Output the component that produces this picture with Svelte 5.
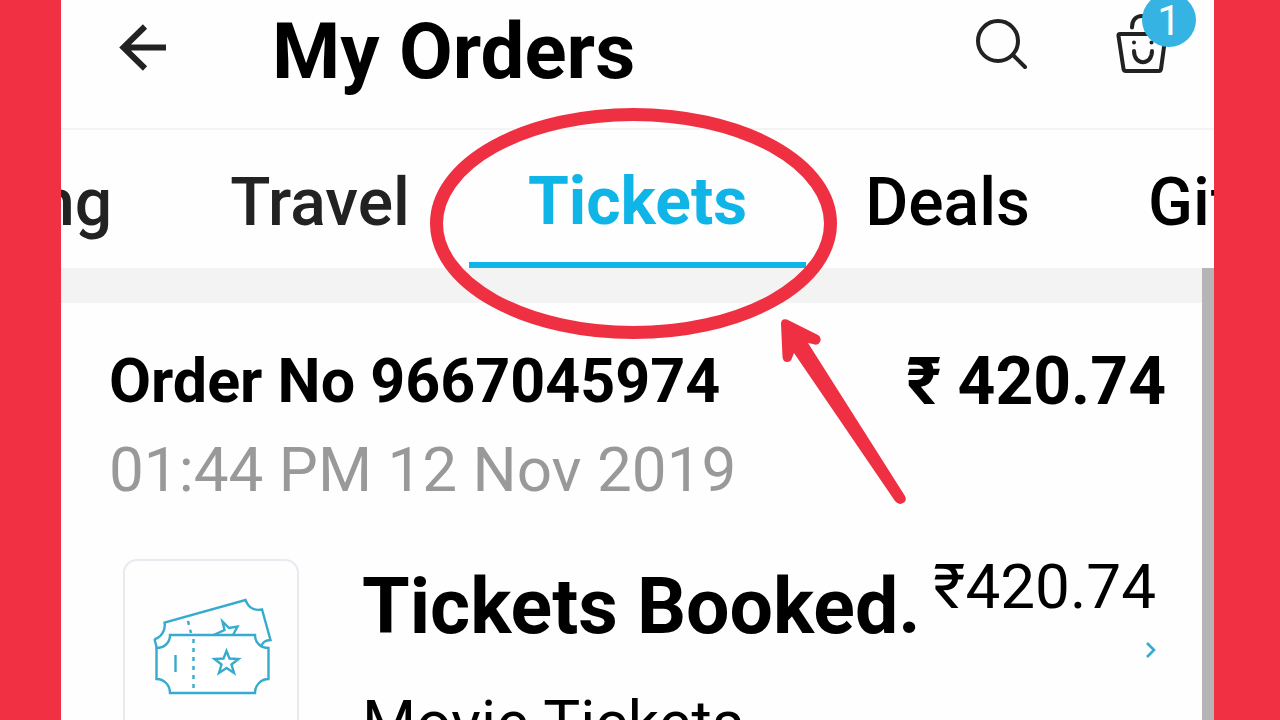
<script>
  const before = ['Shopping', 'Travel'];
  const after = ['Deals', 'Gift Cards'];
  const order = {
    number: '9667045974',
    total: '420.74',
    placed: '01:44 PM 12 Nov 2019',
    status: 'Tickets Booked.',
    item: 'Movie Tickets'
  };
</script>

<div class="stage">
  <div class="phone">
    <header>
      <button class="icon" aria-label="Back">
        <svg width="50" height="58" viewBox="0 1 50 58" fill="none" stroke="#222" stroke-width="6">
          <path d="M49 25.500H6M28 4.500L6.500 25.500L28 46.500" />
        </svg>
      </button>
      <h1>My Orders</h1>
      <button class="icon" aria-label="Search">
        <svg width="54" height="66" viewBox="0 2 54 66" fill="none" stroke="#222" stroke-width="4" stroke-linecap="round">
          <circle cx="24" cy="24" r="20" />
          <path d="M39 38L51 50" />
        </svg>
      </button>
      <button class="icon bag" aria-label="Cart, 1 item">
        <svg width="54" height="66" viewBox="0 2 54 66" fill="none" stroke="#222" stroke-width="4" stroke-linecap="round" stroke-linejoin="round">
          <path d="M6 17H50Q52 17 51.500 19L47 52Q46.500 54 45 54H12Q10 54 9.500 52L4.500 19Q4 17 6 17Z" />
          <path d="M18 10.500C18 3 22 -1 28 -1C34 -1 38 3 38 10.500" />
          <path d="M20 34C20 49 38 49 38 34" />
          <path d="M20 25.500V25.600M37.500 25.500V25.600" />
        </svg>
        <span class="badge">1</span>
      </button>
    </header>

    <nav>
      <div class="side left">
        {#each before as label}<a class="tab soft" href="#{label}">{label}</a>{/each}
      </div>
      <div class="current">
        <a class="tab active" href="#Tickets" aria-current="page">Tickets</a>
        <svg class="mark" width="480" height="400" viewBox="0 0 480 400" aria-hidden="true">
          <ellipse cx="203.500" cy="115.500" rx="197" ry="109" fill="none" stroke="#ef3042" stroke-width="13" />
          <path fill="#ef3042" d="M351 216Q351 210 357 211.500L388 227Q392 230 390 234Q388 238 383 236L378 235L475 388Q477 392 474 394.500Q469 398 465 393L364 245L362 250Q361 254 357 254Q353 254 352.500 249Z" />
        </svg>
      </div>
      <div class="side">
        {#each after as label}<a class="tab" href="#{label}">{label}</a>{/each}
      </div>
    </nav>

    <main>
      <div class="band"></div>
      <section>
        <div class="line summary">
          <h2>Order No {order.number}</h2>
          <strong>₹ {order.total}</strong>
        </div>
        <time>{order.placed}</time>

        <article>
          <div class="thumb">
            <svg width="120" height="100" viewBox="0 0 120 100" fill="none" stroke="#36abcd" stroke-width="2.400">
              <path d="M1.500 41C8 40 13 32 11.500 24.500L92.500 2C95 9 101 13 109 11.500L117.500 42C113 42 109 44.500 108 49M1.500 41L4 51" />
              <path d="M35 23L38 35" stroke-dasharray="4 5" />
              <path d="M60.500 37L71.500 32L69.500 23.500L76 30L84.500 28.500L80 37" />
              <path d="M17 37H102C102 45 108 50 115.500 50V81C108 81 102 87 102 95H17C17 87 11 81 3.500 81V50C11 50 17 45 17 37Z" fill="#fff" />
              <path d="M40.500 41V92" stroke-dasharray="4 5" />
              <path d="M22.500 57V74" />
              <path d="M73.500 53L76.500 60.500L85.500 61L78.500 66.500L81 75L73.500 70L66 75L68.500 66.500L61.500 61L70.500 60.500Z" />
            </svg>
          </div>
          <div class="details">
            <h3>{order.status}</h3>
            <p>{order.item}</p>
          </div>
          <div class="cost">
            <span>₹{order.total}</span>
            <button class="more" aria-label="Order details">
              <svg width="12" height="18" viewBox="0 0 12 18" fill="none" stroke="#36abcd" stroke-width="2.600"><path d="M3 2L10 9L3 16" /></svg>
            </button>
          </div>
        </article>
      </section>
      <div class="scroll"></div>
    </main>
  </div>
</div>

<style>
  .stage {
    box-sizing: border-box;
    height: 100vh;
    padding: 0 66px 0 61px;
    background: #f13044;
    font-family: Roboto, "Liberation Sans", sans-serif;
    color: #000;
    overflow: hidden;
  }
  .phone {
    height: 100%;
    display: flex;
    flex-direction: column;
    background: #fefefe;
  }
  h1, h2, h3, p { margin: 0; white-space: nowrap; }
  svg { display: block; overflow: visible; }
  button { padding: 0; border: 0; background: none; font: inherit; }
  header {
    display: flex;
    align-items: center;
    padding: 0 46px 24px 56px;
    border-bottom: 2px solid #f4f4f4;
  }
  h1 {
    flex: 1;
    padding-left: 105px;
    font-size: 78px;
    line-height: 104px;
    font-weight: 700;
  }
  .bag { position: relative; margin-left: 86px; }
  .badge {
    position: absolute;
    left: 28px;
    top: -26px;
    width: 54px;
    height: 54px;
    border-radius: 50%;
    background: #35b4e3;
    color: #fff;
    font-size: 42px;
    line-height: 56px;
    text-align: center;
  }
  nav {
    display: grid;
    grid-template-columns: minmax(0, 1fr) auto minmax(0, 1fr);
  }
  .side { display: flex; overflow: hidden; }
  .left { justify-content: flex-end; }
  .current { position: relative; z-index: 1; }
  .tab {
    display: block;
    padding: 8px 59px 0;
    font-size: 66px;
    font-weight: 500;
    line-height: 130px;
    color: #000;
    text-decoration: none;
    white-space: nowrap;
  }
  .soft { color: #222; }
  .active {
    padding-top: 12px;
    line-height: 120px;
    border-bottom: 6px solid #10b5e8;
    color: #10b5e8;
    font-weight: 700;
  }
  .mark {
    position: absolute;
    left: -39px;
    top: -22px;
    pointer-events: none;
  }
  main { position: relative; flex: 1; min-height: 0; overflow: hidden; }
  .band { height: 35px; background: #f3f3f3; }
  .scroll {
    position: absolute;
    inset: 0 0 0 auto;
    width: 12px;
    background: #b5b5b5;
  }
  section { padding: 40px 48px 0; }
  .line { display: flex; justify-content: space-between; }
  .summary { line-height: 78px; white-space: nowrap; }
  h2 { font-size: 61px; line-height: 76px; font-weight: 700; }
  strong { font-size: 66px; font-weight: 700; }
  time {
    display: block;
    padding-top: 10px;
    font-size: 62px;
    line-height: 78px;
    color: #999;
  }
  article {
    display: flex;
    align-items: flex-start;
    padding: 50px 10px 0 14px;
  }
  .thumb {
    box-sizing: border-box;
    flex: none;
    width: 176px;
    height: 200px;
    padding: 37px 0 0 28px;
    border: 2px solid #e9eaf0;
    border-radius: 14px;
  }
  .details { flex: 1; padding-left: 63px; }
  h3 { font-size: 77px; line-height: 96px; font-weight: 700; }
  p { padding-top: 30px; font-size: 62px; line-height: 76px; }
  .cost {
    display: flex;
    flex-direction: column;
    align-items: flex-end;
    font-size: 62px;
    line-height: 56px;
  }
  .more { margin-top: 26px; }
</style>
